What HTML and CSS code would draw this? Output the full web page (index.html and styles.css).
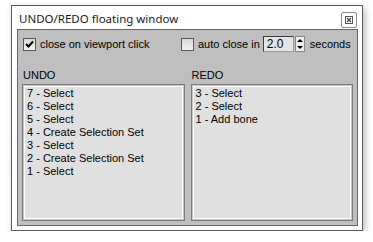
FILE: index.html
```html
<!DOCTYPE html>
<html lang="en">
<head>
    <meta charset="UTF-8">
    <meta name="viewport" content="width=device-width, initial-scale=1.0">
    <title>UNDO/REDO floating window</title>
    <link rel="stylesheet" href="styles.css">
</head>
<body>

    <div class="window">
        <div class="titlebar">
            <span class="title">UNDO/REDO floating window</span>
            <button class="close" aria-label="Close">
                <svg width="8" height="8" viewBox="0 0 8 8">
                    <rect x="0.5" y="0.5" width="7" height="7" fill="none" stroke="#555" stroke-width="1"/>
                    <path d="M2 2 L6 6 M6 2 L2 6" stroke="#444" stroke-width="1.2"/>
                </svg>
            </button>
        </div>

        <div class="body">
            <div class="panel">
                <div class="options">
                    <label class="opt opt-first">
                        <span class="check">
                            <svg width="11" height="11" viewBox="0 0 11 11">
                                <path d="M2 5 L4.5 7.5 L9 2.5" fill="none" stroke="#000" stroke-width="2"/>
                            </svg>
                        </span>
                        close on viewport click
                    </label>
                    <label class="opt">
                        <span class="check"></span>
                        auto close in
                    </label>
                    <span class="spinner">
                        <span class="spin-value">2.0</span>
                        <span class="spin-btns">
                            <span class="spin-up"></span>
                            <span class="spin-down"></span>
                        </span>
                    </span>
                    <span class="unit">seconds</span>
                </div>

                <div class="lists">
                    <div class="col">
                        <div class="col-label">UNDO</div>
                        <ul class="list">
                            <li>7 - Select</li>
                            <li>6 - Select</li>
                            <li>5 - Select</li>
                            <li>4 - Create Selection Set</li>
                            <li>3 - Select</li>
                            <li>2 - Create Selection Set</li>
                            <li>1 - Select</li>
                        </ul>
                    </div>
                    <div class="col">
                        <div class="col-label">REDO</div>
                        <ul class="list">
                            <li>3 - Select</li>
                            <li>2 - Select</li>
                            <li>1 - Add bone</li>
                        </ul>
                    </div>
                </div>
            </div>
        </div>
    </div>

</body>
</html>
```

FILE: styles.css
```css
body {
    margin: 0;
    padding: 5px 0 0 11px;
    background-color: #fff;
    font-family: "Liberation Sans", Arial, sans-serif;
    font-size: 11px;
    color: #000;
}
.window {
    width: 352px;
    height: 226px;
    box-sizing: border-box;
    border: 1px solid #5e5e5e;
    background-color: #fff;
    box-shadow: 2px 3px 7px rgba(0, 0, 0, 0.28);
}
.titlebar {
    height: 23px;
    display: flex;
    justify-content: space-between;
    align-items: flex-start;
    padding: 0 5px 0 7px;
}
.title {
    font-family: "Noto Sans", "Open Sans", sans-serif;
    font-size: 11.5px;
    line-height: 16px;
    padding-top: 5px;
    color: #1a1a1a;
}
.close {
    margin-top: 6px;
    width: 16px;
    height: 16px;
    padding: 0;
    border: 1px solid #8c8c8c;
    border-radius: 2px;
    background-color: #fff;
    display: flex;
    align-items: center;
    justify-content: center;
}
.body {
    padding: 0 4px 4px 5px;
}
.panel {
    border: 1px solid #666;
    background-color: #bfbfbf;
    padding: 6px 4px 4px 4px;
}
.options {
    display: flex;
    align-items: center;
    height: 16px;
    padding-left: 1px;
    white-space: nowrap;
}
.opt {
    display: flex;
    align-items: center;
    line-height: 13px;
}
.opt-first {
    width: 158px;
}
.check {
    width: 13px;
    height: 13px;
    box-sizing: border-box;
    border: 1px solid #5a5a5a;
    background: linear-gradient(#d8d8d8, #f2f2f2);
    margin-right: 4px;
    display: flex;
    align-items: center;
    justify-content: center;
}
.spinner {
    display: flex;
    margin-left: 3px;
    height: 16px;
}
.spin-value {
    width: 31px;
    box-sizing: border-box;
    border: 1px solid #3c3c3c;
    border-right-color: #9a9a9a;
    border-bottom-color: #9a9a9a;
    background-color: #e4e4e4;
    padding-left: 3px;
    line-height: 14px;
    font-size: 12px;
}
.spin-btns {
    width: 10px;
    margin-left: 1px;
    box-sizing: border-box;
    border: 1px solid #8a8a8a;
    background-color: #ececec;
    display: flex;
    flex-direction: column;
    align-items: center;
    justify-content: space-around;
}
.spin-up {
    width: 0;
    height: 0;
    border-left: 3px solid transparent;
    border-right: 3px solid transparent;
    border-bottom: 3px solid #000;
}
.spin-down {
    width: 0;
    height: 0;
    border-left: 3px solid transparent;
    border-right: 3px solid transparent;
    border-top: 3px solid #000;
}
.unit {
    margin-left: 5px;
}
.lists {
    display: grid;
    grid-template-columns: 1fr 1fr;
    gap: 6px;
    margin-top: 17px;
}
.col-label {
    line-height: 13px;
    margin-bottom: 2px;
    padding-left: 1px;
}
.list {
    list-style: none;
    margin: 0;
    height: 137px;
    box-sizing: border-box;
    border: 1px solid #7c7c7c;
    box-shadow: inset 0 0 0 1px #c4c4c4, inset 0 0 0 2px #fff;
    background-color: #e0e0e0;
    padding: 2px 4px;
}
.list li {
    line-height: 13px;
    white-space: nowrap;
}
```
